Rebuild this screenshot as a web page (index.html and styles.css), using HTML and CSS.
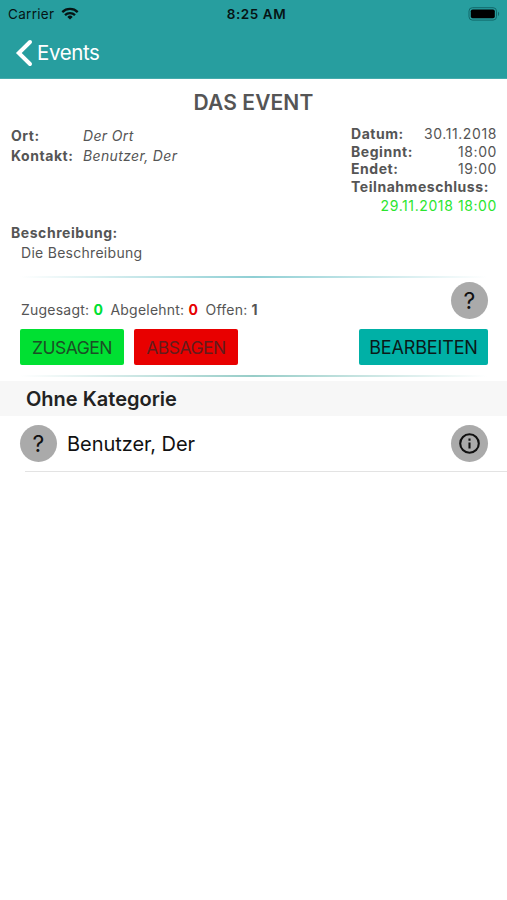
FILE: index.html
```
<!DOCTYPE html>
<html lang="de">
<head>
    <meta charset="UTF-8">
    <meta name="viewport" content="width=device-width, initial-scale=1.0">
    <title>Das Event</title>
    <link rel="stylesheet" href="styles.css">
</head>
<body>

    <header>
        <div class="status-bar">
            <div class="carrier">
                <span>Carrier</span>
                <svg width="18" height="13" viewBox="0 0 18 13" fill="none" stroke="#061414" stroke-width="2.3">
                    <path d="M1.3 5.1a11 11 0 0 1 15.4 0"/>
                    <path d="M4 8.1a7.1 7.1 0 0 1 10 0"/>
                    <path d="M9 12.6L6.3 9.9a3.8 3.8 0 0 1 5.4 0z" fill="#061414" stroke="none"/>
                </svg>
            </div>
            <span class="time">8:25 AM</span>
            <svg class="battery" width="33" height="14" viewBox="0 0 33 14">
                <rect x="1" y="0.7" width="27.5" height="12.4" rx="3.4" fill="none" stroke="#12686a" stroke-width="1"/>
                <rect x="2.8" y="2.5" width="24" height="8.8" rx="1.8" fill="#000"/>
                <path d="M30 4.8v4.2c1.5-.6 1.5-3.6 0-4.2z" fill="#12686a"/>
            </svg>
        </div>
        <div class="nav-bar">
            <svg width="18" height="28" viewBox="0 0 18 28" fill="none" stroke="#fff" stroke-width="4" stroke-linecap="round">
                <path d="M15 3L3.8 14 15 25"/>
            </svg>
            <span class="nav-back">Events</span>
        </div>
    </header>

    <h1>DAS EVENT</h1>

    <div class="details">
        <div class="details-left">
            <b>Ort:</b><i>Der Ort</i>
            <b>Kontakt:</b><i>Benutzer, Der</i>
        </div>
        <div class="details-right">
            <div class="row"><b>Datum:</b><span>30.11.2018</span></div>
            <div class="row"><b>Beginnt:</b><span>18:00</span></div>
            <div class="row"><b>Endet:</b><span>19:00</span></div>
            <div class="row"><b>Teilnahmeschluss:</b></div>
            <div class="deadline">29.11.2018 18:00</div>
        </div>
    </div>

    <div class="description">
        <b>Beschreibung:</b>
        <p>Die Beschreibung</p>
    </div>

    <div class="divider"></div>

    <div class="summary">
        <div class="counts">
            <span>Zugesagt: <b class="yes">0</b></span>
            <span>Abgelehnt: <b class="no">0</b></span>
            <span>Offen: <b>1</b></span>
        </div>
        <div class="circle">?</div>
    </div>

    <div class="buttons">
        <button class="btn-yes">ZUSAGEN</button>
        <button class="btn-no">ABSAGEN</button>
        <button class="btn-edit">BEARBEITEN</button>
    </div>

    <div class="divider divider-bottom"></div>

    <h2>Ohne Kategorie</h2>
    <div class="member">
        <div class="circle">?</div>
        <span class="member-name">Benutzer, Der</span>
        <div class="circle">
            <svg width="23" height="23" viewBox="0 0 23 23" fill="none" stroke="#111" stroke-width="2.1">
                <circle cx="11.5" cy="11.5" r="9.3"/>
                <path d="M11.5 10.4v6M11.5 6.5v2.2"/>
            </svg>
        </div>
    </div>

</body>
</html>
```
FILE: styles.css
```
* { margin: 0; padding: 0; box-sizing: border-box; }
body {
    background-color: #fff;
    color: #555;
    font-family: Inter, sans-serif;
    font-size: 14px;
}
svg { display: block; }
header {
    height: 79px;
    background-color: #279e9f;
    border-bottom: 1px solid #45abac;
}
.status-bar {
    display: grid;
    grid-template-columns: 1fr auto 1fr;
    align-items: center;
    height: 27px;
    padding: 0 6px 0 8px;
    color: #061414;
    font-size: 13.5px;
}
.carrier { display: flex; align-items: center; gap: 7px; letter-spacing: 0.3px; }
.time { font-weight: 600; letter-spacing: 0.55px; margin-left: 4px; }
.battery { justify-self: end; }
.nav-bar {
    display: flex;
    align-items: center;
    gap: 4px;
    height: 51px;
    padding-left: 15px;
}
.nav-back { color: #fff; font-size: 20.5px; letter-spacing: -0.4px; }
h1 {
    height: 46px;
    line-height: 47px;
    text-align: center;
    font-size: 21px;
    font-weight: 600;
    letter-spacing: 0.1px;
}
b { font-weight: 700; letter-spacing: 0.55px; }
.details {
    display: flex;
    justify-content: space-between;
    height: 98px;
    padding: 0 10px 0 11px;
    letter-spacing: 0.35px;
}
.details-left {
    display: grid;
    grid-template-columns: 72px auto;
    grid-auto-rows: 20px;
    align-content: start;
    line-height: 20px;
    padding-top: 1px;
}
.details-right { width: 146px; }
.row {
    display: flex;
    justify-content: space-between;
    height: 17.6px;
    line-height: 17.6px;
}
.row span, .deadline { letter-spacing: 0.6px; }
.deadline {
    line-height: 21px;
    text-align: right;
    color: #2be52f;
    white-space: nowrap;
}
.description { height: 53px; padding-left: 11px; line-height: 20px; letter-spacing: 0.28px; }
.description p { padding-left: 10px; }
.divider {
    height: 2px;
    margin: 0 10px;
    background: linear-gradient(to right, #fff 2%, #8fcfd4 50%, #fff 98%);
}
.summary {
    display: flex;
    justify-content: space-between;
    height: 51px;
    padding: 4px 19px 0 21px;
}
.counts { display: flex; gap: 7px; padding-top: 18px; line-height: 20px; letter-spacing: 0.22px; }
.yes { color: #00e032; }
.no { color: #e60000; }
.circle {
    display: flex;
    align-items: center;
    justify-content: center;
    width: 37px;
    height: 37px;
    border-radius: 50%;
    background-color: #aaa;
    color: #111;
    font-size: 23px;
}
.buttons {
    display: flex;
    gap: 10px;
    padding: 0 19px 0 20px;
}
button {
    width: 104px;
    height: 36px;
    border: none;
    border-radius: 2px;
    font-family: inherit;
    font-size: 17.5px;
    letter-spacing: -0.5px;
}
.btn-yes { background-color: #00e032; color: #1b4f25; }
.btn-no { background-color: #e80000; color: #631c1c; }
.btn-edit {
    width: 129px;
    margin-left: auto;
    background-color: #00b0a6;
    color: #0b1a19;
    font-size: 18px;
    letter-spacing: -0.15px;
}
.divider-bottom {
    margin-top: 10px;
    background: linear-gradient(to right, #fff 2%, #97cdc8 50%, #fff 98%);
}
h2 {
    height: 35px;
    margin-top: 4px;
    padding-left: 26px;
    background-color: #f7f7f7;
    color: #222;
    line-height: 36px;
    font-size: 20px;
    font-weight: 600;
}
.member {
    display: flex;
    align-items: center;
    height: 56px;
    padding: 0 19px 1px 20px;
    background: linear-gradient(#e3e3e3, #e3e3e3) 25px 100% / 100% 1px no-repeat;
}
.member-name { flex: 1; padding-left: 10px; color: #111; font-size: 20px; letter-spacing: -0.05px; }
```
